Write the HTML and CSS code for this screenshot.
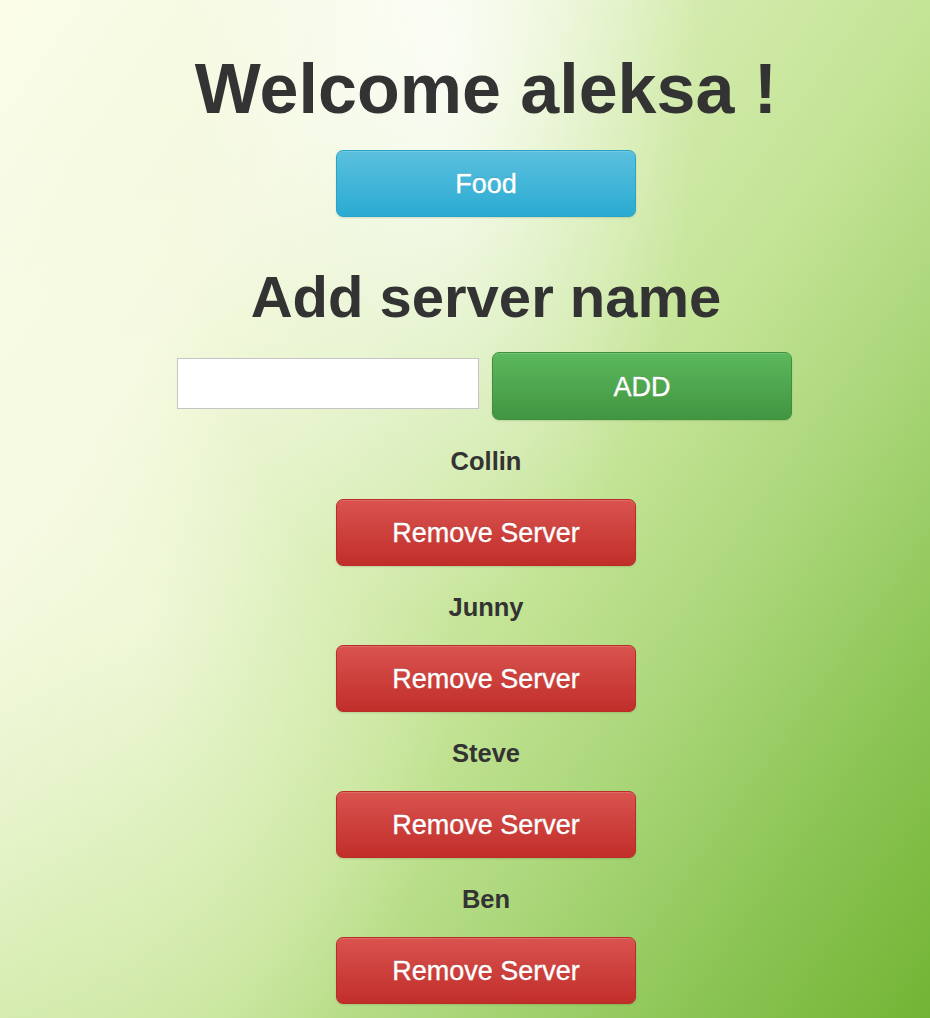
FILE: index.html
```html
<!DOCTYPE html>
<html lang="en">
<head>
<meta charset="utf-8">
<title>Welcome</title>
<link rel="stylesheet" href="styles.css">
</head>
<body>
<main class="page">
  <h1 class="title">Welcome aleksa !</h1>
  <button class="btn btn-info">Food</button>
  <h2 class="subtitle">Add server name</h2>
  <div class="add-row">
    <input class="name-input" type="text" aria-label="Server name">
    <button class="btn btn-success">ADD</button>
  </div>
  <ul class="servers">
    <li class="server"><p class="server-name">Collin</p><button class="btn btn-danger">Remove Server</button></li>
    <li class="server"><p class="server-name">Junny</p><button class="btn btn-danger">Remove Server</button></li>
    <li class="server"><p class="server-name">Steve</p><button class="btn btn-danger">Remove Server</button></li>
    <li class="server"><p class="server-name">Ben</p><button class="btn btn-danger">Remove Server</button></li>
  </ul>
</main>
</body>
</html>
```

FILE: styles.css
```css
html, body {
  margin: 0;
  padding: 0;
  height: 100%;
}

body {
  font-family: "Liberation Sans", Arial, sans-serif;
  color: #333;
  overflow: hidden;
  background:
    radial-gradient(ellipse 260px 560px at 440px 60px, rgba(255,255,255,0.8), rgba(255,255,255,0) 100%),
    radial-gradient(ellipse 320px 520px at 140px 620px, rgba(255,255,240,0.5), rgba(255,255,255,0) 100%),
    linear-gradient(125deg, #fbfde9 0%, #f2f8dc 24%, #d3ebac 43%, #c4e496 57%, #acd77b 70%, #8cc555 85%, #72b434 100%);
  background-repeat: no-repeat;
  min-height: 1018px;
}

.page {
  display: flex;
  flex-direction: column;
  align-items: center;
  padding-left: 42px;
}

.title {
  margin: 51px 0 0;
  font-size: 70px;
  line-height: 77px;
  font-weight: bold;
  color: #333;
}

.subtitle {
  margin: 48px 0 0;
  font-size: 58px;
  line-height: 64px;
  font-weight: bold;
  color: #333;
}

.btn {
  box-sizing: border-box;
  width: 300px;
  height: 67px;
  border: 1px solid transparent;
  border-radius: 7px;
  font-family: "Liberation Sans", Arial, sans-serif;
  font-size: 27px;
  color: #fff;
  -webkit-text-stroke: 0.35px #fff;
  text-shadow: 0 -1px 0 rgba(0,0,0,0.2);
  box-shadow: inset 0 1px 0 rgba(255,255,255,0.15), 0 1px 2px rgba(0,0,0,0.12);
  cursor: pointer;
  padding: 2px 0 0;
}

.btn-info {
  margin-top: 22px;
  background: linear-gradient(#5bc0de, #2aabd2);
  border-color: #28a4c9;
}

.btn-success {
  height: 68px;
  background: linear-gradient(#5cb85c, #419641);
  border-color: #3e8f3e;
}

.btn-danger {
  background: linear-gradient(#d9534f, #c12e2a);
  border-color: #b92c28;
}

.add-row {
  display: flex;
  align-items: flex-start;
  gap: 13px;
  margin-top: 23px;
  margin-left: -3px;
}

.name-input {
  box-sizing: border-box;
  width: 302px;
  height: 51px;
  margin: 6px 0 0;
  border: 1px solid #c4c4c4;
  border-radius: 0;
  background: #fff;
  font-size: 20px;
  padding: 0 8px;
}

.servers {
  list-style: none;
  margin: 0;
  padding: 0;
  display: flex;
  flex-direction: column;
  align-items: center;
}

.server {
  display: flex;
  flex-direction: column;
  align-items: center;
}

.server-name {
  margin: 26px 0 23px;
  font-size: 25.5px;
  line-height: 30px;
  font-weight: bold;
  color: #333;
}
```
